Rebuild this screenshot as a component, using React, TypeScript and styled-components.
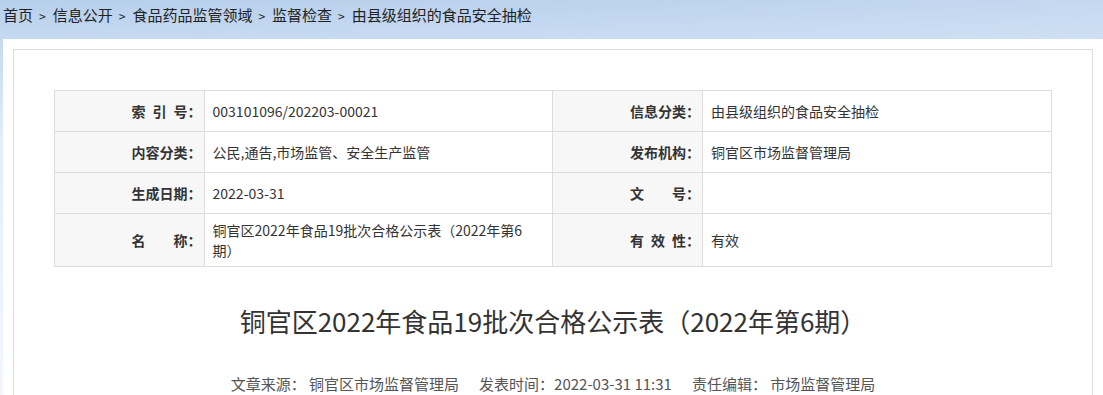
import React from 'react';
import styled, { createGlobalStyle } from 'styled-components';

const GlobalStyle = createGlobalStyle`
  html {
    background: linear-gradient(to bottom, #b7cfec 0, #c5d9f1 39px, #e4edf8 140px, #f3f7fc 395px);
  }
  body {
    margin: 0;
    font-family: "Noto Sans CJK SC", "Microsoft YaHei", sans-serif;
    color: #333;
  }
`;

const Crumbs = styled.div`
  height: 39px;
  padding-left: 3px;
  font-size: 15px;
  line-height: 30px;
  color: #222;
  background: linear-gradient(to right, rgba(255,255,255,0) 0, rgba(255,255,255,0.08) 60%, rgba(255,255,255,0.18) 100%);
`;

const Sep = styled.span`
  display: inline-block;
  margin: 0 7px 0 6px;
  font-size: 12px;
`;

const Panel = styled.div`
  margin-left: 3px;
  background: #fff;
  padding: 10px 10px 0 10px;
`;

const Frame = styled.div`
  border: 1px solid #ddd;
  border-bottom: none;
  padding: 40px 40px 0 40px;
  min-height: 360px;
`;

const InfoTable = styled.table`
  width: 100%;
  table-layout: fixed;
  border-collapse: collapse;
  border: 1px solid #ddd;
`;

const Cell = styled.td<{ tall?: boolean }>`
  border: 1px solid #ddd;
  height: ${p => (p.tall ? '52px' : '40px')};
  font-size: 14px;
  line-height: 20px;
  padding: 0;
  vertical-align: middle;
`;

const Label = styled(Cell)`
  background: #f7f7f7;
  font-weight: bold;
  text-align: right;
  padding-right: 2px;
  white-space: pre;
`;

const Value = styled(Cell)`
  padding: 0 18px 0 8px;
  color: #333;
`;

const Title = styled.h1`
  margin: 36px 0 0;
  text-align: center;
  font-size: 26px;
  font-weight: normal;
  line-height: 36px;
  color: #333;
`;

const Meta = styled.div`
  margin-top: 34px;
  display: flex;
  justify-content: center;
  gap: 20px;
  font-size: 15px;
  line-height: 22px;
  color: #555;
`;

const crumbs = ['首页', '信息公开', '食品药品监管领域', '监督检查', '由县级组织的食品安全抽检'];

const rows: [string, string, string, string][] = [
  ['索\u2002引\u2002号：', '003101096/202203-00021', '信息分类：', '由县级组织的食品安全抽检'],
  ['内容分类：', '公民,通告,市场监管、安全生产监管', '发布机构：', '铜官区市场监督管理局'],
  ['生成日期：', '2022-03-31', '文　　号：', ''],
  ['名　　称：', '铜官区2022年食品19批次合格公示表（2022年第6期）', '有\u2002效\u2002性：', '有效'],
];

export default function App() {
  return (
    <>
      <GlobalStyle />
      <Crumbs>
        {crumbs.map((c, i) => (
          <React.Fragment key={c}>
            {i > 0 && <Sep>&gt;</Sep>}
            {c}
          </React.Fragment>
        ))}
      </Crumbs>
      <Panel>
        <Frame>
          <InfoTable>
            <colgroup>
              <col style={{ width: '15%' }} />
              <col style={{ width: '35%' }} />
              <col style={{ width: '15%' }} />
              <col style={{ width: '35%' }} />
            </colgroup>
            <tbody>
              {rows.map((r, i) => {
                const tall = i === rows.length - 1;
                return (
                  <tr key={r[0]}>
                    <Label tall={tall}>{r[0]}</Label>
                    <Value tall={tall}>{r[1]}</Value>
                    <Label tall={tall}>{r[2]}</Label>
                    <Value tall={tall}>{r[3]}</Value>
                  </tr>
                );
              })}
            </tbody>
          </InfoTable>
          <Title>铜官区2022年食品19批次合格公示表（2022年第6期）</Title>
          <Meta>
            <span>文章来源： 铜官区市场监督管理局</span>
            <span>发表时间：2022-03-31 11:31</span>
            <span>责任编辑： 市场监督管理局</span>
          </Meta>
        </Frame>
      </Panel>
    </>
  );
}
